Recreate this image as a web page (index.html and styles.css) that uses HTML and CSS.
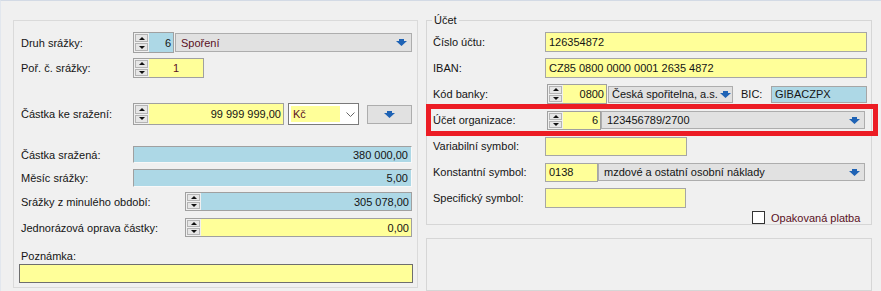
FILE: index.html
```html
<!DOCTYPE html>
<html>
<head>
    <meta charset="utf-8">
    <link rel="stylesheet" href="styles.css">
</head>
<body>
    <div class="screen">
        <div class="panel">
            <div class="row r1">
                <label class="lbl">Druh srážky:</label>
                <div class="spin w41">
                    <span class="spin-btns"><i class="up"></i><i class="down"></i></span>
                    <span class="val blue">6</span>
                </div>
                <div class="combo w237 h19 ml1">
                    <span class="maroon">Spoření</span>
                    <svg width="11" height="7" viewBox="0 0 11 7"><path d="M3 0h5v2h3L5.5 7 0 2h3z" fill="#1f63b5"/></svg>
                </div>
            </div>
            <div class="row r2">
                <label class="lbl">Poř. č. srážky:</label>
                <div class="spin w71">
                    <span class="spin-btns"><i class="up"></i><i class="down"></i></span>
                    <span class="val yellow center maroon">1</span>
                </div>
            </div>
            <div class="row r3">
                <label class="lbl">Částka ke sražení:</label>
                <div class="spin w151">
                    <span class="spin-btns"><i class="up"></i><i class="down"></i></span>
                    <span class="val yellow">99 999 999,00</span>
                </div>
                <div class="currency">
                    <span class="maroon">Kč</span>
                    <svg width="9" height="5" viewBox="0 0 9 5"><path d="M0.5 0.5l4 4 4-4" fill="none" stroke="#666"/></svg>
                </div>
                <div class="btn">
                    <svg width="11" height="7" viewBox="0 0 11 7"><path d="M3 0h5v2h3L5.5 7 0 2h3z" fill="#1f63b5"/></svg>
                </div>
            </div>
            <div class="row r4">
                <label class="lbl">Částka sražená:</label>
                <div class="field blue num sunken w279">380 000,00</div>
            </div>
            <div class="row r5">
                <label class="lbl">Měsíc srážky:</label>
                <div class="field blue num sunken w279">5,00</div>
            </div>
            <div class="row r6">
                <label class="lbl wide">Srážky z minulého období:</label>
                <div class="spin w227">
                    <span class="spin-btns"><i class="up"></i><i class="down"></i></span>
                    <span class="val blue">305 078,00</span>
                </div>
            </div>
            <div class="row r7">
                <label class="lbl wide">Jednorázová oprava částky:</label>
                <div class="spin w227">
                    <span class="spin-btns"><i class="up"></i><i class="down"></i></span>
                    <span class="val yellow">0,00</span>
                </div>
            </div>
            <div class="row note-label">
                <label class="lbl">Poznámka:</label>
            </div>
            <div class="note yellow"></div>
        </div>

        <div class="right">
            <div class="group account">
                <span class="group-title">Účet</span>
                <div class="row">
                    <label class="lbl">Číslo účtu:</label>
                    <div class="field yellow w322">126354872</div>
                </div>
                <div class="row">
                    <label class="lbl">IBAN:</label>
                    <div class="field yellow w322 h20">CZ85 0800 0000 0001 2635 4872</div>
                </div>
                <div class="row">
                    <label class="lbl">Kód banky:</label>
                    <div class="spin w60 ml2">
                        <span class="spin-btns"><i class="up"></i><i class="down"></i></span>
                        <span class="val yellow">0800</span>
                    </div>
                    <div class="combo w125 h17 ml1 tight">
                        <span>Česká spořitelna, a.s.</span>
                        <svg width="11" height="7" viewBox="0 0 11 7"><path d="M3 0h5v2h3L5.5 7 0 2h3z" fill="#1f63b5"/></svg>
                    </div>
                    <label class="bic">BIC:</label>
                    <div class="field blue w96 h17 bic-field">GIBACZPX</div>
                </div>
                <div class="row">
                    <label class="lbl">Účet organizace:</label>
                    <div class="spin w54 ml2 h19">
                        <span class="spin-btns"><i class="up"></i><i class="down"></i></span>
                        <span class="val yellow">6</span>
                    </div>
                    <div class="combo w264 h18">
                        <span>123456789/2700</span>
                        <svg width="11" height="7" viewBox="0 0 11 7"><path d="M3 0h5v2h3L5.5 7 0 2h3z" fill="#1f63b5"/></svg>
                    </div>
                </div>
                <div class="row">
                    <label class="lbl">Variabilní symbol:</label>
                    <div class="field yellow w142 h19"></div>
                </div>
                <div class="row">
                    <label class="lbl">Konstantní symbol:</label>
                    <div class="field yellow w53 h19">0138</div>
                    <div class="combo w267 h18">
                        <span>mzdové a ostatní osobní náklady</span>
                        <svg width="11" height="7" viewBox="0 0 11 7"><path d="M3 0h5v2h3L5.5 7 0 2h3z" fill="#1f63b5"/></svg>
                    </div>
                </div>
                <div class="row">
                    <label class="lbl">Specifický symbol:</label>
                    <div class="field yellow w141"></div>
                </div>
                <div class="check-row">
                    <span class="check"></span>
                    <span class="maroon">Opakovaná platba</span>
                </div>
            </div>
            <div class="group empty"></div>

            <div class="highlight"></div>
        </div>
    </div>
</body>
</html>
```

FILE: styles.css
```css
body {
    margin: 0;
    background: #f0f0f0;
    font-family: "Liberation Sans", Arial, sans-serif;
    font-size: 11px;
    color: #141414;
}
.screen {
    display: flex;
    gap: 8px;
    box-sizing: border-box;
    width: 881px;
    height: 291px;
    overflow: hidden;
    padding: 19px 0 0 12px;
    border-top: 1px solid #d3dae5;
    border-left: 1px solid #e2e7ee;
}
.panel {
    box-sizing: border-box;
    width: 405px;
    height: 268px;
    flex-shrink: 0;
    border: 1px solid #dadada;
    padding: 0 5px;
    display: flex;
    flex-direction: column;
}
.row {
    display: flex;
    align-items: center;
    height: 20px;
    flex-shrink: 0;
}
.lbl {
    flex-shrink: 0;
    box-sizing: border-box;
    width: 114px;
    padding-left: 2px;
    white-space: nowrap;
}
.lbl.wide {
    width: 166px;
}
.maroon {
    color: #5a1024;
}
.yellow {
    background: #ffff99;
}
.blue {
    background: #add8e6;
}

/* left panel rows */
.r1 { margin-top: 11px; height: 21px; }
.r2 { margin-top: 5px; height: 20px; }
.r3 { margin-top: 25px; height: 22px; }
.r4 { margin-top: 21px; height: 17px; }
.r5 { margin-top: 6px; height: 18px; }
.r6 { margin-top: 5px; height: 19px; }
.r7 { margin-top: 7px; height: 19px; }
.note-label { margin-top: 12px; height: 14px; }
.note {
    box-sizing: border-box;
    margin-top: 1px;
    height: 19px;
    width: 394px;
    border: 1px solid #6e6e6e;
}

/* inputs */
.field {
    box-sizing: border-box;
    height: 100%;
    display: flex;
    align-items: center;
    padding: 0 3px;
    border: 1px solid #a6a6a6;
    white-space: nowrap;
    overflow: hidden;
    flex-shrink: 0;
}
.field.num {
    justify-content: flex-end;
}
.field.sunken {
    border-color: #a0a0a0 #f8f8f8 #f8f8f8 #a0a0a0;
}
.spin {
    box-sizing: border-box;
    display: flex;
    height: 100%;
    border: 1px solid #a0a0a0;
    flex-shrink: 0;
}
.spin-btns {
    box-sizing: border-box;
    width: 15px;
    flex-shrink: 0;
    display: flex;
    flex-direction: column;
    gap: 1px;
    padding: 1px 1px 1px 1px;
    background: #f0f0f0;
}
.spin-btns i {
    flex: 1;
    display: flex;
    align-items: center;
    justify-content: center;
    border: 1px solid #b4b4b4;
    background: #e6e6e6;
}
.spin-btns i::after {
    content: "";
    border-left: 3px solid transparent;
    border-right: 3px solid transparent;
}
.spin-btns .up::after {
    border-bottom: 3px solid #111;
}
.spin-btns .down::after {
    border-top: 3px solid #111;
}
.spin .val {
    flex: 1;
    display: flex;
    align-items: center;
    justify-content: flex-end;
    padding-right: 2px;
    white-space: nowrap;
}
.spin .val.center {
    justify-content: center;
    padding-right: 0;
}
.combo {
    box-sizing: border-box;
    display: flex;
    align-items: center;
    padding: 0 4px 0 5px;
    background: #e1e1e1;
    border: 1px solid #adadad;
    flex-shrink: 0;
}
.combo span {
    flex: 1;
    white-space: nowrap;
    overflow: hidden;
}
.combo svg {
    flex-shrink: 0;
}
.combo.tight {
    padding: 0 1px 0 3px;
}
.currency {
    box-sizing: border-box;
    margin-left: 4px;
    width: 71px;
    height: 100%;
    display: flex;
    align-items: center;
    padding: 2px;
    background: #fff;
    border: 1px solid #7a7a7a;
}
.currency span {
    box-sizing: border-box;
    width: 49px;
    height: 100%;
    display: flex;
    align-items: center;
    padding-left: 2px;
    background: #ffff99;
}
.currency svg {
    margin-left: 6px;
}
.btn {
    box-sizing: border-box;
    margin-left: 8px;
    width: 45px;
    height: 19px;
    display: flex;
    align-items: center;
    justify-content: center;
    background: #e1e1e1;
    border: 1px solid #adadad;
}

/* sizes */
.w41 { width: 41px; }
.w53 { width: 53px; }
.w54 { width: 54px; }
.w60 { width: 60px; }
.w71 { width: 71px; }
.w96 { width: 96px; }
.w125 { width: 125px; }
.w141 { width: 141px; }
.w142 { width: 142px; }
.w151 { width: 151px; }
.w227 { width: 227px; }
.w237 { width: 237px; }
.w264 { width: 264px; }
.w267 { width: 267px; }
.w279 { width: 279px; }
.w322 { width: 322px; }
.h17 { height: 17px; }
.h18 { height: 18px; }
.h19 { height: 19px; }
.h20 { height: 20px; }
.ml1 { margin-left: 1px; }
.ml2 { margin-left: 2px; }

/* right column */
.right {
    position: relative;
    width: 446px;
    flex-shrink: 0;
    display: flex;
    flex-direction: column;
}
.group {
    position: relative;
    box-sizing: border-box;
    border: 1px solid #d6d6d6;
}
.account {
    height: 216px;
    padding: 11px 4px 0 6px;
    display: flex;
    flex-direction: column;
    gap: 6px;
}
.account .lbl {
    width: 112px;
    padding-left: 0;
}
.group-title {
    position: absolute;
    top: -7px;
    left: 5px;
    padding: 0 2px;
    line-height: 13px;
    background: #f0f0f0;
}
.bic {
    box-sizing: border-box;
    width: 38px;
    padding-left: 8px;
    flex-shrink: 0;
}
.check-row {
    display: flex;
    align-items: center;
    gap: 6px;
    margin-top: -3px;
    padding-left: 319px;
    height: 13px;
}
.check {
    box-sizing: border-box;
    width: 13px;
    height: 13px;
    background: #fff;
    border: 1px solid #333;
}
.empty {
    margin-top: 13px;
    height: 70px;
}
.highlight {
    position: absolute;
    left: 0;
    top: 84px;
    box-sizing: border-box;
    width: 452px;
    height: 32px;
    border: 5px solid #ec1c24;
}
```
